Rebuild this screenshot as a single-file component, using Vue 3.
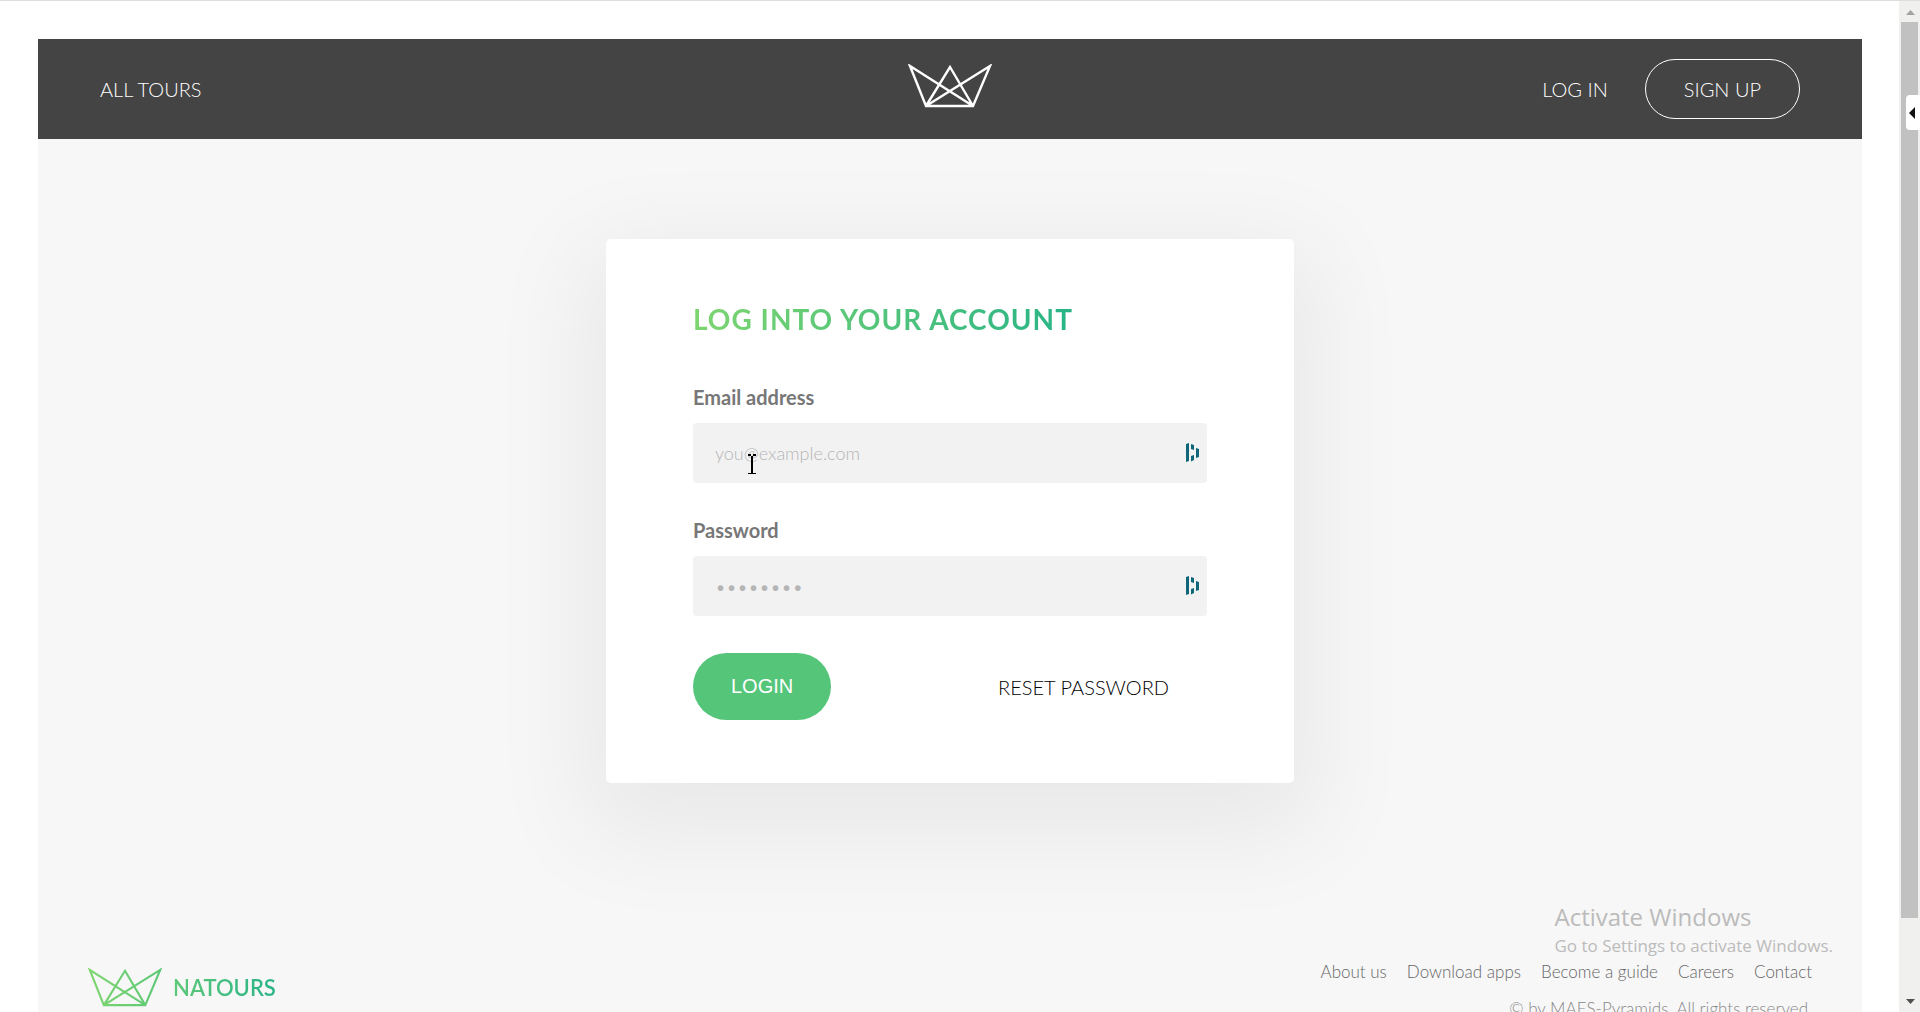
<script setup>
import { ref } from 'vue'

const email = ref('')
const password = ref('')
const footerLinks = ['About us', 'Download apps', 'Become a guide', 'Careers', 'Contact']
</script>

<template>
  <div class="window">
    <div class="page">
      <header class="header">
        <nav class="nav">
          <a href="#" class="nav-link">All tours</a>
        </nav>
        <a href="#" class="header-logo" aria-label="Natours">
          <svg width="84" height="50" viewBox="0 0 84 50" fill="none" stroke="#fff" stroke-width="2.400">
            <path d="M2 2 L18 42 H65 L82 2 L18 42 L42 3 L65 42 Z" />
          </svg>
        </a>
        <nav class="nav nav-right">
          <a href="#" class="nav-link">Log in</a>
          <a href="#" class="nav-link nav-cta">Sign up</a>
        </nav>
      </header>

      <div class="content">
        <main class="main">
          <section class="card">
            <h2 class="title">Log into your account</h2>
            <form @submit.prevent>
              <div class="group">
                <label for="email">Email address</label>
                <div class="field">
                  <input id="email" v-model="email" type="email" placeholder="you@example.com" />
                  <svg class="manager" width="14" height="20" viewBox="0 0 14 20" fill="#0e6678">
                    <path d="M0 1 3 0V18L0 19ZM5 1 8 2V7L5 6ZM5 13 8 12V17L5 18.500ZM10 5 13 6V14L10 15Z" />
                  </svg>
                  <svg class="cursor" width="9" height="21" viewBox="0 0 9 21" fill="none" stroke="#000" stroke-width="2">
                    <path d="M0 1H3M5 1H8M4 2V19" />
                    <path d="M0 19.500H8" stroke-width="1" />
                  </svg>
                </div>
              </div>
              <div class="group">
                <label for="password">Password</label>
                <div class="field">
                  <input id="password" v-model="password" type="password" placeholder="••••••••" />
                  <svg class="manager" width="14" height="20" viewBox="0 0 14 20" fill="#0e6678">
                    <path d="M0 1 3 0V18L0 19ZM5 1 8 2V7L5 6ZM5 13 8 12V17L5 18.500ZM10 5 13 6V14L10 15Z" />
                  </svg>
                </div>
              </div>
              <div class="actions">
                <button type="submit" class="login">Login</button>
                <a href="#" class="reset">Reset password</a>
              </div>
            </form>
          </section>
        </main>

        <footer class="footer">
          <a href="#" class="brand">
            <svg width="74" height="39" viewBox="0 0 84 44" fill="none" stroke="url(#leaf)" stroke-width="2.400">
              <defs>
                <linearGradient id="leaf" x1="0" y1="0" x2="1" y2="0">
                  <stop offset="0" stop-color="#7dd56f" />
                  <stop offset="1" stop-color="#5ec878" />
                </linearGradient>
              </defs>
              <path d="M2 2 L18 42 H65 L82 2 L18 42 L42 3 L65 42 Z" />
            </svg>
            <span>NATOURS</span>
          </a>
          <div class="footer-info">
            <ul class="footer-nav">
              <li v-for="link in footerLinks" :key="link"><a href="#">{{ link }}</a></li>
            </ul>
            <p class="copyright">© by MAES-Pyramids. All rights reserved.</p>
          </div>
        </footer>
      </div>
    </div>

    <div class="scrollbar" aria-hidden="true">
      <svg width="19" height="21" viewBox="0 0 19 21"><path d="M5 14 9.500 9 14 14Z" fill="#a3a3a3" /></svg>
      <div class="track"><div class="thumb"></div></div>
      <svg width="19" height="20" viewBox="0 0 19 20"><path d="M5 7 9.500 12 14 7Z" fill="#505050" /></svg>
    </div>

    <button type="button" class="drawer" aria-label="Open side panel">
      <svg width="12" height="12" viewBox="0 0 12 12"><path d="M3 6 9 0V12Z" fill="#111" /></svg>
    </button>

    <aside class="watermark">
      <strong>Activate Windows</strong>
      <span>Go to Settings to activate Windows.</span>
    </aside>
  </div>
</template>

<style>
body {
  margin: 0;
}
</style>

<style scoped>
* {
  box-sizing: border-box;
}
a {
  color: inherit;
  text-decoration: none;
}
.window {
  position: relative;
  display: flex;
  height: 100vh;
  overflow: hidden;
  border-top: 1px solid #ddd;
  background: #fff;
  color: #777;
  font-family: Lato, sans-serif;
  font-size: 20px;
  font-weight: 300;
  line-height: 32px;
}
.page {
  flex: 1;
  min-width: 0;
  padding: 38px 37px 38px 38px;
}
.header {
  display: flex;
  align-items: center;
  justify-content: space-between;
  height: 100px;
  padding: 0 62px;
  background: #444;
  color: #fff;
}
.nav {
  display: flex;
  flex: 1;
  align-items: center;
}
.nav-right {
  justify-content: flex-end;
  gap: 37px;
}
.nav-link {
  text-transform: uppercase;
}
.header-logo svg,
.brand svg,
.scrollbar svg,
.drawer svg {
  display: block;
}
.nav-cta {
  padding: 13px 38px;
  border: 1px solid currentColor;
  border-radius: 100px;
}
.content {
  background: #f7f7f7;
}
.main {
  padding: 100px 75px;
}
.card {
  max-width: 688px;
  margin: 0 auto;
  padding: 62px 87px 63px;
  border-radius: 5px;
  background: #fff;
  box-shadow: 0 31px 100px 25px rgba(0, 0, 0, 0.06);
}
.title {
  width: fit-content;
  margin: 0 0 44px;
  background: linear-gradient(to right, #7dd56f, #28b487);
  background-clip: text;
  color: transparent;
  font-size: 28px;
  font-weight: 700;
  line-height: 36px;
  letter-spacing: 1px;
  text-transform: uppercase;
}
.group {
  margin-bottom: 31px;
}
.group label {
  display: block;
  margin-bottom: 10px;
  font-weight: 700;
}
.field {
  position: relative;
}
.field input {
  display: block;
  width: 100%;
  height: 60px;
  padding: 0 22px;
  border: 0;
  border-radius: 4px;
  background: #f2f2f2;
  color: inherit;
  font: inherit;
  font-size: 18px;
}
.field input[type="password"] {
  font-size: 19px;
}
.field input::placeholder {
  color: #b5b5b5;
  opacity: 1;
}
.manager {
  position: absolute;
  top: 20px;
  right: 7px;
}
.cursor {
  position: absolute;
  top: 31px;
  left: 55px;
}
.actions {
  display: flex;
  align-items: center;
  justify-content: space-between;
  margin-top: 37px;
}
.login {
  height: 67px;
  padding: 0 38px;
  border: 0;
  border-radius: 100px;
  background: #55c57a;
  color: #fff;
  font-family: "Liberation Sans", Arial, sans-serif;
  font-size: 20px;
  font-weight: 400;
  text-transform: uppercase;
}
.reset {
  padding: 0 38px;
  color: #000;
  text-transform: uppercase;
}
.footer {
  display: flex;
  align-items: flex-start;
  justify-content: space-between;
  padding: 73px 50px;
}
.brand {
  display: flex;
  align-items: center;
  gap: 11px;
  margin-top: 12px;
}
.brand span {
  background: linear-gradient(to right, #5ec878, #28b487);
  background-clip: text;
  color: transparent;
  font-size: 22px;
  font-weight: 600;
}
.footer-info {
  font-size: 17px;
  text-align: right;
}
.footer-nav {
  display: flex;
  gap: 20px;
  margin: 0 0 5px;
  padding: 0;
  color: #666;
  list-style: none;
}
.copyright {
  margin: 0;
  color: #888;
}
.scrollbar {
  display: flex;
  flex-direction: column;
  width: 21px;
  padding: 0 2px;
  background: #f0f0ef;
}
.track {
  flex: 1;
}
.thumb {
  height: 92.4%;
  background: #c1c1c1;
}
.drawer {
  position: absolute;
  top: 94px;
  right: 0;
  width: 14px;
  height: 35px;
  padding: 0;
  border: 0;
  border-radius: 4px 0 0 4px;
  background: #fff;
}
.watermark {
  position: absolute;
  right: 87px;
  bottom: 54px;
  display: flex;
  flex-direction: column;
  color: #bbb;
  font-family: "Open Sans", sans-serif;
  font-size: 17px;
  font-weight: 400;
  line-height: 24px;
}
.watermark strong {
  font-size: 24px;
  font-weight: 400;
  line-height: 34px;
}
</style>
